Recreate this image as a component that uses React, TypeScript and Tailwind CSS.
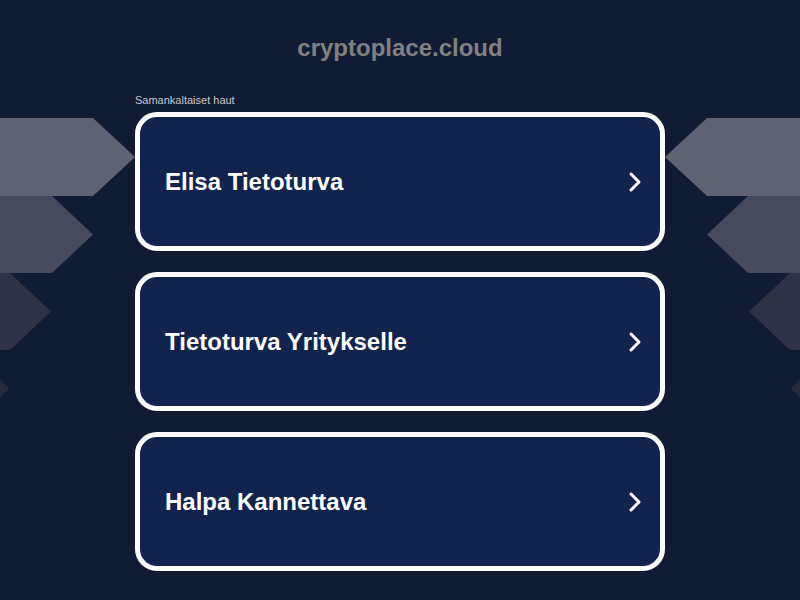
import React from "react";

const searches = ["Elisa Tietoturva", "Tietoturva Yritykselle", "Halpa Kannettava"];

const Arrows = ({ flip }: { flip?: boolean }) => (
  <svg
    className={`absolute top-0 h-[600px] w-[140px] ${flip ? "right-0 -scale-x-100" : "left-0"}`}
    viewBox="0 0 140 600"
  >
    <polygon points="0,118 93,118 135,157 93,196 0,196" fill="#5f6271" />
    <polygon points="0,196 52,196 93,234.5 52,273 0,273" fill="#474a5b" />
    <polygon points="0,273 10,273 51,311.5 10,350 0,350" fill="#2f3246" />
    <polygon points="0,379 9,388.5 0,398" fill="#24283c" />
  </svg>
);

export default function App() {
  return (
    <div className="relative h-[600px] w-[800px] overflow-hidden bg-[#111b34] font-['Liberation_Sans',Arial,sans-serif]">
      <Arrows />
      <Arrows flip />
      <div className="relative flex flex-col items-center">
        <h1 className="mt-[34px] text-[24px] font-bold leading-[28px] text-[#808080]">cryptoplace.cloud</h1>
        <div className="mt-[32px] w-[530px]">
          <p className="text-[11px] leading-[13px] text-[#c3c7d1]">Samankaltaiset haut</p>
          <div className="mt-[5px] flex flex-col gap-[21px]">
            {searches.map((s) => (
              <a
                key={s}
                href="#"
                className="flex h-[139px] items-center justify-between rounded-[22px] border-[5px] border-white bg-[#11244d] pl-[25px] pr-[18px]"
              >
                <span className="text-[24px] font-bold leading-none text-white">{s}</span>
                <svg width="14" height="22" viewBox="0 0 14 22" fill="none">
                  <path d="M3 3 L11 11 L3 19" stroke="white" strokeWidth="3" strokeLinecap="round" strokeLinejoin="round" />
                </svg>
              </a>
            ))}
          </div>
        </div>
      </div>
    </div>
  );
}
